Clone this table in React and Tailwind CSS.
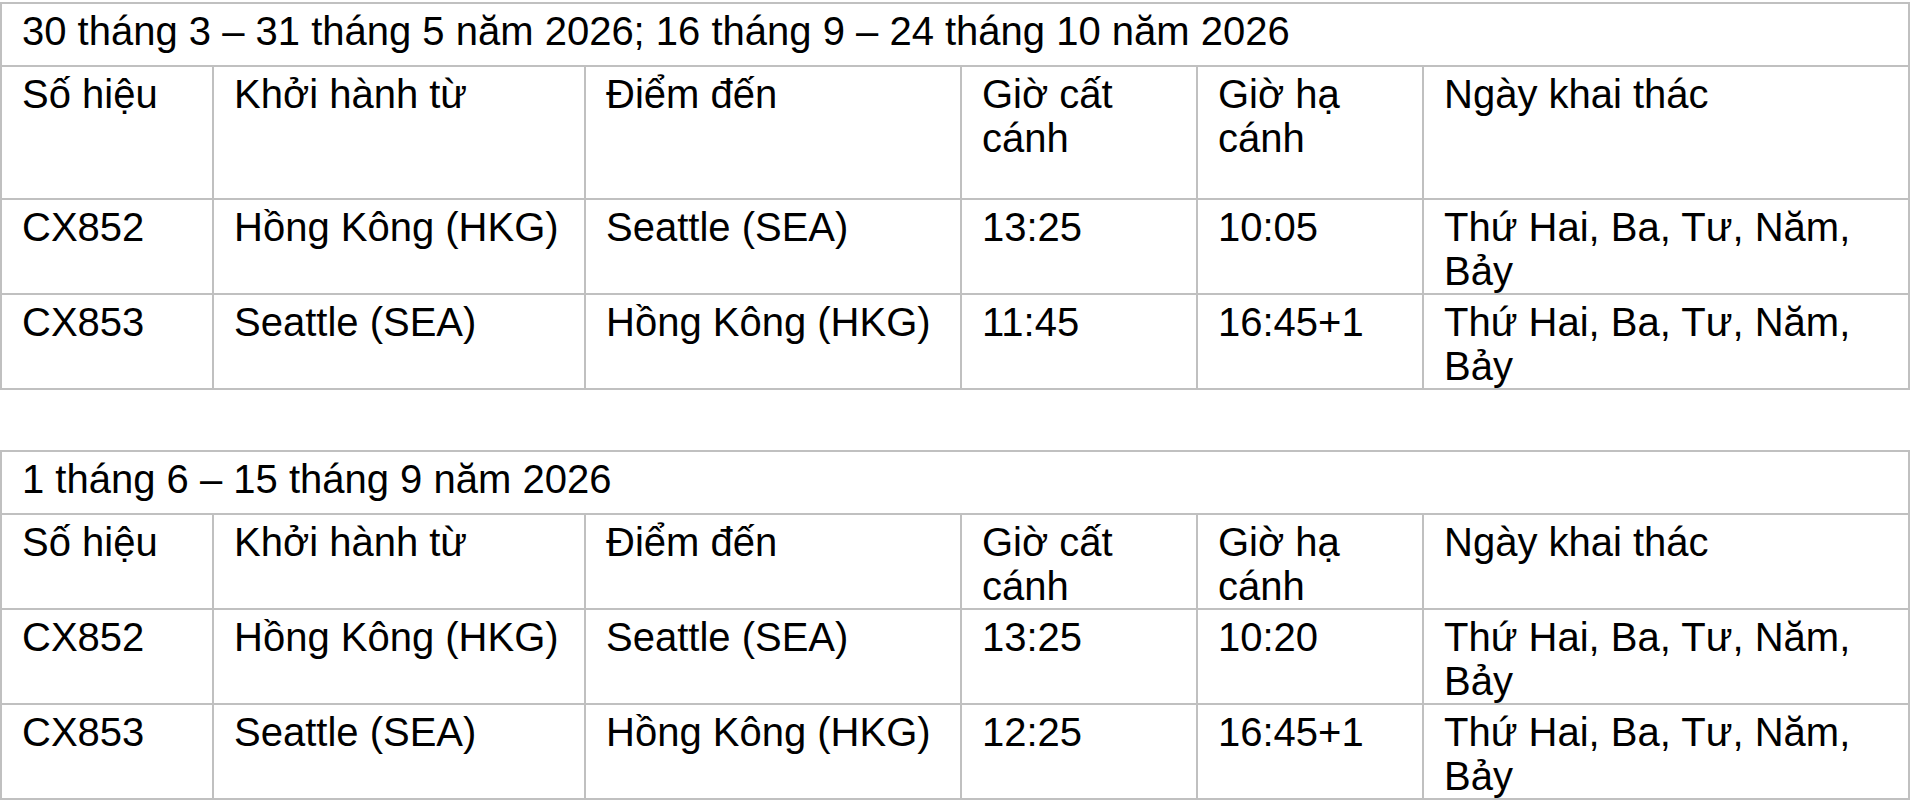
import React from 'react';

const cols = ['w-[212px]', 'w-[372px]', 'w-[376px]', 'w-[236px]', 'w-[226px]', 'w-[486px]'];

const headers = ['Số hiệu', 'Khởi hành từ', 'Điểm đến', 'Giờ cất cánh', 'Giờ hạ cánh', 'Ngày khai thác'];

const schedules = [
  {
    period: '30 tháng 3 – 31 tháng 5 năm 2026; 16 tháng 9 – 24 tháng 10 năm 2026',
    headerPad: 'pb-[38px]',
    flights: [
      ['CX852', 'Hồng Kông (HKG)', 'Seattle (SEA)', '13:25', '10:05', 'Thứ Hai, Ba, Tư, Năm, Bảy'],
      ['CX853', 'Seattle (SEA)', 'Hồng Kông (HKG)', '11:45', '16:45+1', 'Thứ Hai, Ba, Tư, Năm, Bảy'],
    ],
  },
  {
    period: '1 tháng 6 – 15 tháng 9 năm 2026',
    headerPad: 'pb-0',
    flights: [
      ['CX852', 'Hồng Kông (HKG)', 'Seattle (SEA)', '13:25', '10:20', 'Thứ Hai, Ba, Tư, Năm, Bảy'],
      ['CX853', 'Seattle (SEA)', 'Hồng Kông (HKG)', '12:25', '16:45+1', 'Thứ Hai, Ba, Tư, Năm, Bảy'],
    ],
  },
];

const cell = 'border-2 border-[#c0c0c0] align-top px-5 pt-[5px] font-normal text-left';

function ScheduleTable({ period, headerPad, flights }) {
  return (
    <table className="w-[1909px] table-fixed border-collapse">
      <colgroup>
        {cols.map((c, i) => (
          <col key={i} className={c} />
        ))}
      </colgroup>
      <thead>
        <tr>
          <th colSpan={6} className={`${cell} pb-[12px]`}>
            {period}
          </th>
        </tr>
        <tr>
          {headers.map((h) => (
            <th key={h} className={`${cell} ${headerPad}`}>
              {h}
            </th>
          ))}
        </tr>
      </thead>
      <tbody>
        {flights.map((row) => (
          <tr key={row[0]}>
            {row.map((v, i) => (
              <td key={i} className={`${cell} pb-0`}>
                {v}
              </td>
            ))}
          </tr>
        ))}
      </tbody>
    </table>
  );
}

export default function App() {
  return (
    <div className="min-h-screen bg-white pt-[2px] text-[40px] leading-[44px] text-black font-['Liberation_Sans',Arial,sans-serif]">
      <div className="flex flex-col gap-[60px]">
        {schedules.map((s) => (
          <ScheduleTable key={s.period} {...s} />
        ))}
      </div>
    </div>
  );
}
